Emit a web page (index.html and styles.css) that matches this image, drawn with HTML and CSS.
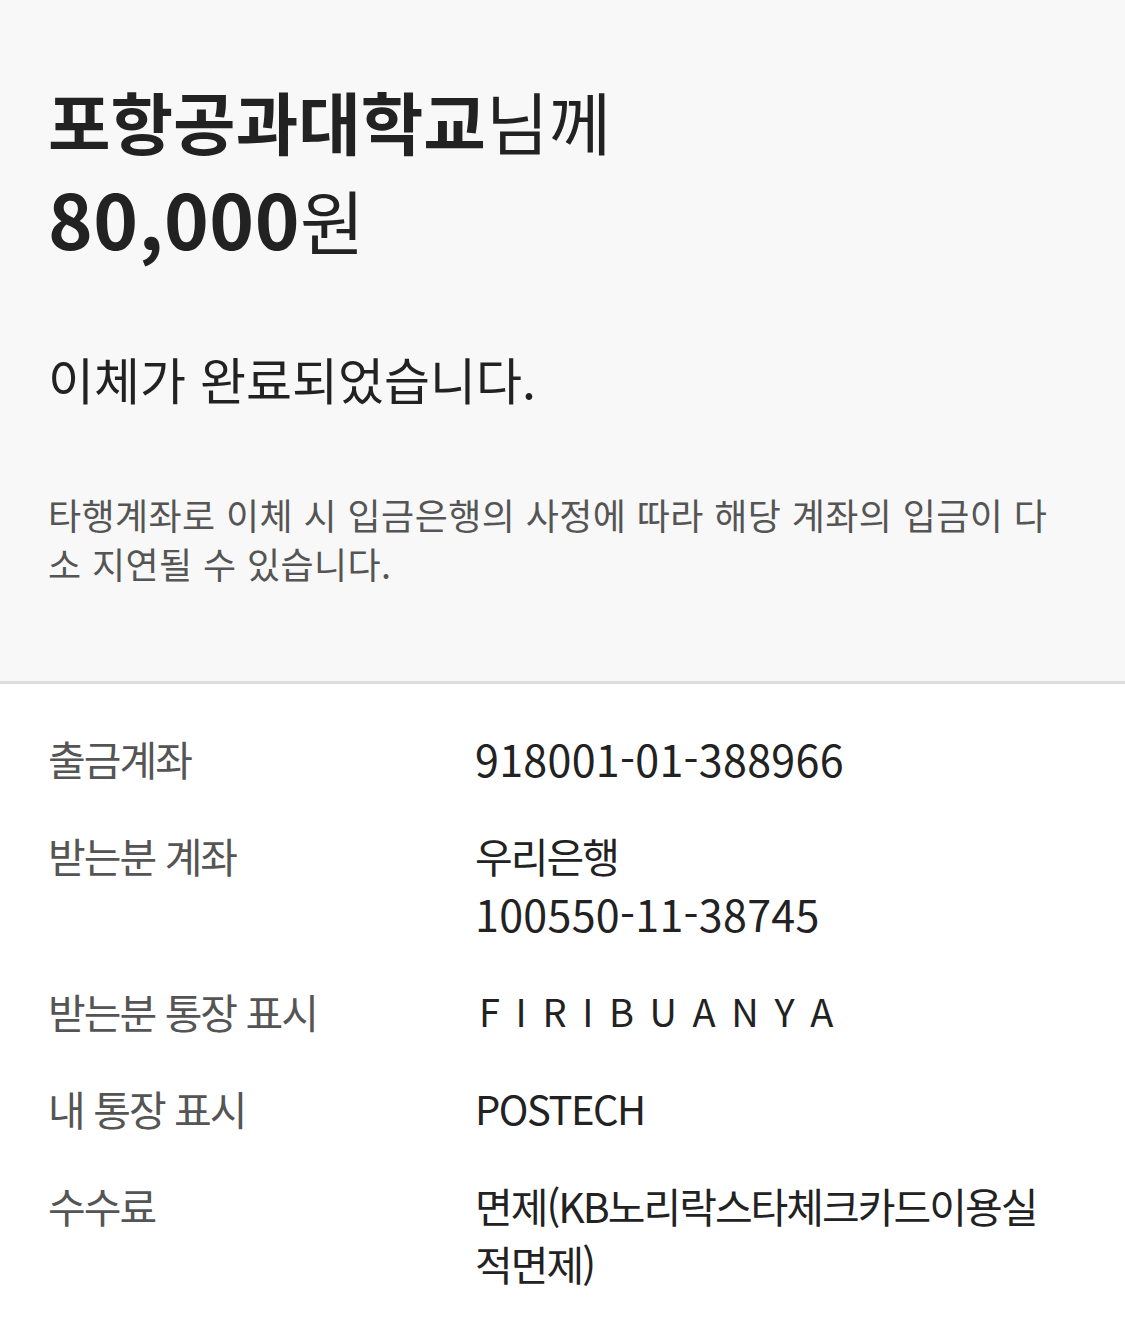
FILE: index.html
```html
<!DOCTYPE html>
<html lang="ko">
<head>
<meta charset="utf-8">
<title>이체 완료</title>
<link rel="stylesheet" href="styles.css">
</head>
<body>
<section class="summary">
  <h1 class="title"><span class="name">포항공과대학교</span><span class="suffix">님께</span><br><span class="amount">80,000<span class="won">원</span></span></h1>
  <p class="done">이체가 완료되었습니다.</p>
  <p class="note">타행계좌로 이체 시 입금은행의 사정에 따라 해당 계좌의 입금이 다소 지연될 수 있습니다.</p>
</section>
<dl class="details">
  <div class="row"><dt>출금계좌</dt><dd class="num">918001-01-388966</dd></div>
  <div class="row"><dt>받는분 계좌</dt><dd>우리은행<br><span class="num">100550-11-38745</span></dd></div>
  <div class="row"><dt>받는분 통장 표시</dt><dd class="spaced">F I R I B U A N Y A</dd></div>
  <div class="row"><dt>내 통장 표시</dt><dd class="latin">POSTECH</dd></div>
  <div class="row"><dt>수수료</dt><dd class="fee">면제(KB노리락스타체크카드이용실적면제)</dd></div>
</dl>
</body>
</html>
```
FILE: styles.css
```css
* { box-sizing: border-box; }
html, body { margin: 0; padding: 0; background: #fff; }
body {
  font-family: "Noto Sans CJK KR", "Noto Sans", sans-serif;
  color: #222;
  width: 1125px;
}
.summary {
  background: #f8f8f8;
  border-bottom: 3px solid #dedede;
  padding: 72px 48px 93px;
}
.title {
  margin: 0;
  font-size: 68px;
  line-height: 97px;
  font-weight: 400;
  letter-spacing: 0;
  color: #222;
}
.name { font-weight: 700; }
.amount {
  font-size: 76px;
  font-weight: 700;
  letter-spacing: 0.5px;
}
.won { font-size: 70px; font-weight: 400; }
.done {
  margin: 79px 0 0;
  font-size: 50px;
  line-height: 60px;
  letter-spacing: 0;
  color: #222;
}
.note {
  margin: 82px 0 0;
  font-size: 36px;
  line-height: 49px;
  letter-spacing: 0.4px;
  color: #555;
  max-width: 1020px;
}
.details {
  margin: 0;
  padding: 45px 48px 30px;
  display: flex;
  flex-direction: column;
  gap: 39px;
}
.row {
  display: grid;
  grid-template-columns: 427px 1fr;
  font-size: 41px;
  line-height: 58px;
}
.row dt {
  color: #555;
  letter-spacing: -2px;
}
.row dd {
  margin: 0;
  color: #222;
  letter-spacing: -2px;
}
.row .num { letter-spacing: 0.3px; font-size: 43px; }
.row .spaced { letter-spacing: 2.5px; font-size: 38px; padding-left: 4px; }
.row .latin { letter-spacing: -1.5px; font-size: 40px; }
.row .fee { max-width: 580px; }
```
